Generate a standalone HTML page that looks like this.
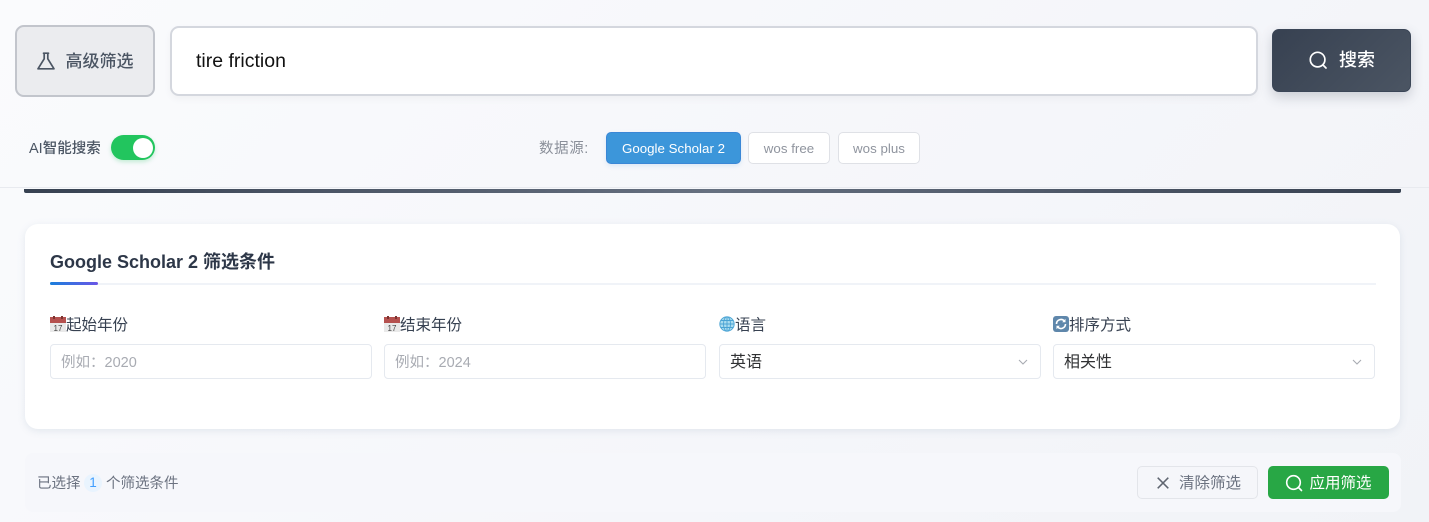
<!DOCTYPE html>
<html lang="zh">
<head>
<meta charset="utf-8">
<title>筛选</title>
<style>
*{box-sizing:border-box;margin:0;padding:0}
html,body{width:1429px;height:522px;overflow:hidden}
body{position:relative;background:linear-gradient(135deg,#fafbfd 0%,#f5f6fa 60%,#f1f3f7 100%);font-family:"Liberation Sans","Noto Sans CJK SC",sans-serif;color:#374151}
.a{position:absolute}
.t{position:absolute;white-space:nowrap;line-height:1}
.c{display:flex;align-items:center;justify-content:center;white-space:nowrap}
.up{position:relative;top:-2px}
.field{position:absolute;top:344px;width:322px;height:35px;background:#fff;border:1px solid #e5e9ef;border-radius:4px;font-size:14.5px;line-height:35px;padding-left:10px}
.ph{color:#a8abb2;line-height:36px}
.sel{color:#303133;font-size:16px;line-height:35px}
.lab{position:absolute;top:316px;font-size:15.5px;line-height:18px;color:#374151;white-space:nowrap}
.src{font-size:13.3px;letter-spacing:.02px}
</style>
</head>
<body>
<!-- advanced filter -->
<div class="a c" style="left:15px;top:25px;width:140px;height:72px;background:#ebecef;border:2px solid #c2c5cc;border-radius:9px;color:#4b5563;font-size:17px;font-weight:500">
<svg width="18" height="18" viewBox="0 0 18 18" style="margin-right:11px" fill="none" stroke="#4b5563" stroke-width="1.7" stroke-linejoin="round" stroke-linecap="round"><path d="M6.5 1.2h5M7.2 1.2v5.6L1 16.8h16L10.8 6.8V1.2"/></svg><span class="up">高级筛选</span></div>
<!-- search input -->
<div class="a" style="left:170px;top:26px;width:1088px;height:70px;background:#fff;border:2px solid #d4d7de;border-radius:9px;box-shadow:0 3px 8px rgba(0,0,0,.04)"></div>
<div class="t" style="left:196px;top:52px;font-size:19.5px;color:#111">tire friction</div>
<!-- search button -->
<div class="a c" style="left:1272px;top:29px;width:139px;height:63px;background:linear-gradient(135deg,#374151,#4b5563);border:1px solid #3b4657;border-radius:7px;color:#fff;font-size:18px;font-weight:500;box-shadow:0 5px 12px rgba(55,65,81,.22)">
<svg width="20" height="20" viewBox="0 0 20 20" style="margin-right:11px;position:relative;top:-1px" fill="none" stroke="#fff" stroke-width="1.7" stroke-linecap="round"><circle cx="9.6" cy="9.6" r="7.3"/><path d="M15 15l3 3"/></svg><span class="up">搜索</span></div>
<!-- AI toggle -->
<div class="t" style="left:29px;top:142px;font-size:14.5px;color:#4b5563;font-weight:500">AI智能搜索</div>
<div class="a" style="left:111px;top:135px;width:44px;height:25px;border-radius:13px;background:#22c55e;box-shadow:0 2px 4px rgba(34,197,94,.25)"></div>
<div class="a" style="left:133px;top:138px;width:20px;height:20px;border-radius:50%;background:#fff"></div>
<!-- data source -->
<div class="t" style="left:539px;top:142px;font-size:14.5px;color:#8a8f99;letter-spacing:.6px">数据源:</div>
<div class="a c src" style="left:606px;top:132px;width:135px;height:32px;background:#3c96da;border:1px solid #3a87d6;border-radius:5px;color:#fff;box-shadow:0 2px 5px rgba(60,150,218,.15)">Google Scholar 2</div>
<div class="a c src" style="left:748px;top:132px;width:82px;height:32px;background:#fff;border:1px solid #dfe1e6;border-radius:5px;color:#8f949e">wos free</div>
<div class="a c src" style="left:838px;top:132px;width:82px;height:32px;background:#fff;border:1px solid #dfe1e6;border-radius:5px;color:#8f949e">wos plus</div>
<!-- divider -->
<div class="a" style="left:0;top:187px;width:1429px;height:1px;background:#e8eaef"></div>
<div class="a" style="left:24px;top:189px;width:1377px;height:4px;border-radius:0 0 2px 2px;background:linear-gradient(90deg,#374151 0%,#667080 50%,#374151 100%)"></div>
<!-- card -->
<div class="a" style="left:25px;top:224px;width:1375px;height:205px;background:#fff;border-radius:13px;box-shadow:0 2px 8px rgba(120,140,170,.16)"></div>
<div class="t" style="left:50px;top:253px;font-size:18px;font-weight:600;color:#2d3748">Google Scholar 2 筛选条件</div>
<div class="a" style="left:50px;top:283px;width:1326px;height:2px;background:#f0f3f8"></div>
<div class="a" style="left:50px;top:282px;width:48px;height:3px;border-radius:2px;background:linear-gradient(90deg,#1a7fdc,#6a56e6)"></div>
<!-- labels -->
<div class="lab" style="left:50px">
<svg width="16" height="16" viewBox="0 0 16 16" style="vertical-align:-2px"><rect y="1" width="16" height="15" fill="#e9e9e9"/><rect y="1" width="16" height="6" fill="#b5514f"/><rect x="3" y="0" width="2" height="3" fill="#7c3330"/><rect x="11" y="0" width="2" height="3" fill="#7c3330"/><text x="8" y="15" font-size="8" text-anchor="middle" fill="#444" font-family="Liberation Sans">17</text></svg>起始年份</div>
<div class="lab" style="left:384px">
<svg width="16" height="16" viewBox="0 0 16 16" style="vertical-align:-2px"><rect y="1" width="16" height="15" fill="#e9e9e9"/><rect y="1" width="16" height="6" fill="#b5514f"/><rect x="3" y="0" width="2" height="3" fill="#7c3330"/><rect x="11" y="0" width="2" height="3" fill="#7c3330"/><text x="8" y="15" font-size="8" text-anchor="middle" fill="#444" font-family="Liberation Sans">17</text></svg>结束年份</div>
<div class="lab" style="left:719px">
<svg width="16" height="16" viewBox="0 0 16 16" style="vertical-align:-2px" fill="none"><circle cx="8" cy="8" r="7.5" fill="#a9dcef"/><g stroke="#4aa3d4" stroke-width=".9"><circle cx="8" cy="8" r="7.2"/><ellipse cx="8" cy="8" rx="3.5" ry="7.2"/><path d="M8 1v14M1 8h14M2 4.5h12M2 11.5h12"/></g></svg>语言</div>
<div class="lab" style="left:1053px">
<svg width="16" height="16" viewBox="0 0 16 16" style="vertical-align:-2px" fill="none"><rect width="16" height="16" rx="3" fill="#5f87ab"/><path d="M3.5 8a4.5 4.5 0 0 1 8-2.8M12.5 8a4.5 4.5 0 0 1-8 2.8" stroke="#fff" stroke-width="1.6"/><path d="M12.5 2.8v3.4H9.2zM3.5 13.2V9.8h3.3z" fill="#fff"/></svg>排序方式</div>
<!-- fields -->
<div class="field ph" style="left:50px">例如&#xFF1A;2020</div>
<div class="field ph" style="left:384px">例如&#xFF1A;2024</div>
<div class="field sel" style="left:719px">英语
<svg class="a" style="right:12px;top:12px" width="10" height="10" viewBox="0 0 10 10" fill="none" stroke="#a8abb2" stroke-width="1.1"><path d="M1 3l4 4 4-4"/></svg></div>
<div class="field sel" style="left:1053px">相关性
<svg class="a" style="right:12px;top:12px" width="10" height="10" viewBox="0 0 10 10" fill="none" stroke="#a8abb2" stroke-width="1.1"><path d="M1 3l4 4 4-4"/></svg></div>
<!-- footer -->
<div class="a" style="left:25px;top:453px;width:1376px;height:59px;background:#f6f7fb;border-radius:8px"></div>
<div class="t" style="left:37px;top:477px;font-size:14.5px;color:#6b7280">已选择</div>
<div class="a c" style="left:84px;top:474px;width:18px;height:18px;border-radius:50%;background:#e9f4fe;color:#409eff;font-size:13.5px;font-weight:500"><span style="position:relative;top:-1px">1</span></div>
<div class="t" style="left:106px;top:477px;font-size:14.5px;color:#6b7280">个筛选条件</div>
<div class="a c" style="left:1137px;top:466px;width:121px;height:33px;background:#f5f6fa;border:1px solid #e3e5ea;border-radius:5px;color:#6b7280;font-size:15.5px;padding-left:3px">
<svg width="12" height="12" viewBox="0 0 12 12" style="margin-right:10px" fill="none" stroke="#5f6570" stroke-width="1.5"><path d="M.7.7l10.6 10.6M11.3.7L.7 11.3"/></svg><span style="position:relative;top:-1px">清除筛选</span></div>
<div class="a c" style="left:1268px;top:466px;width:121px;height:33px;background:#28a745;border-radius:5px;color:#fff;font-size:15.5px">
<svg width="18" height="18" viewBox="0 0 18 18" style="margin-right:6px" fill="none" stroke="#fff" stroke-width="1.6" stroke-linecap="round"><circle cx="8.5" cy="8.5" r="6.8"/><path d="M13.5 13.5l3 3"/></svg><span style="position:relative;top:-1px">应用筛选</span></div>
</body>
</html>
